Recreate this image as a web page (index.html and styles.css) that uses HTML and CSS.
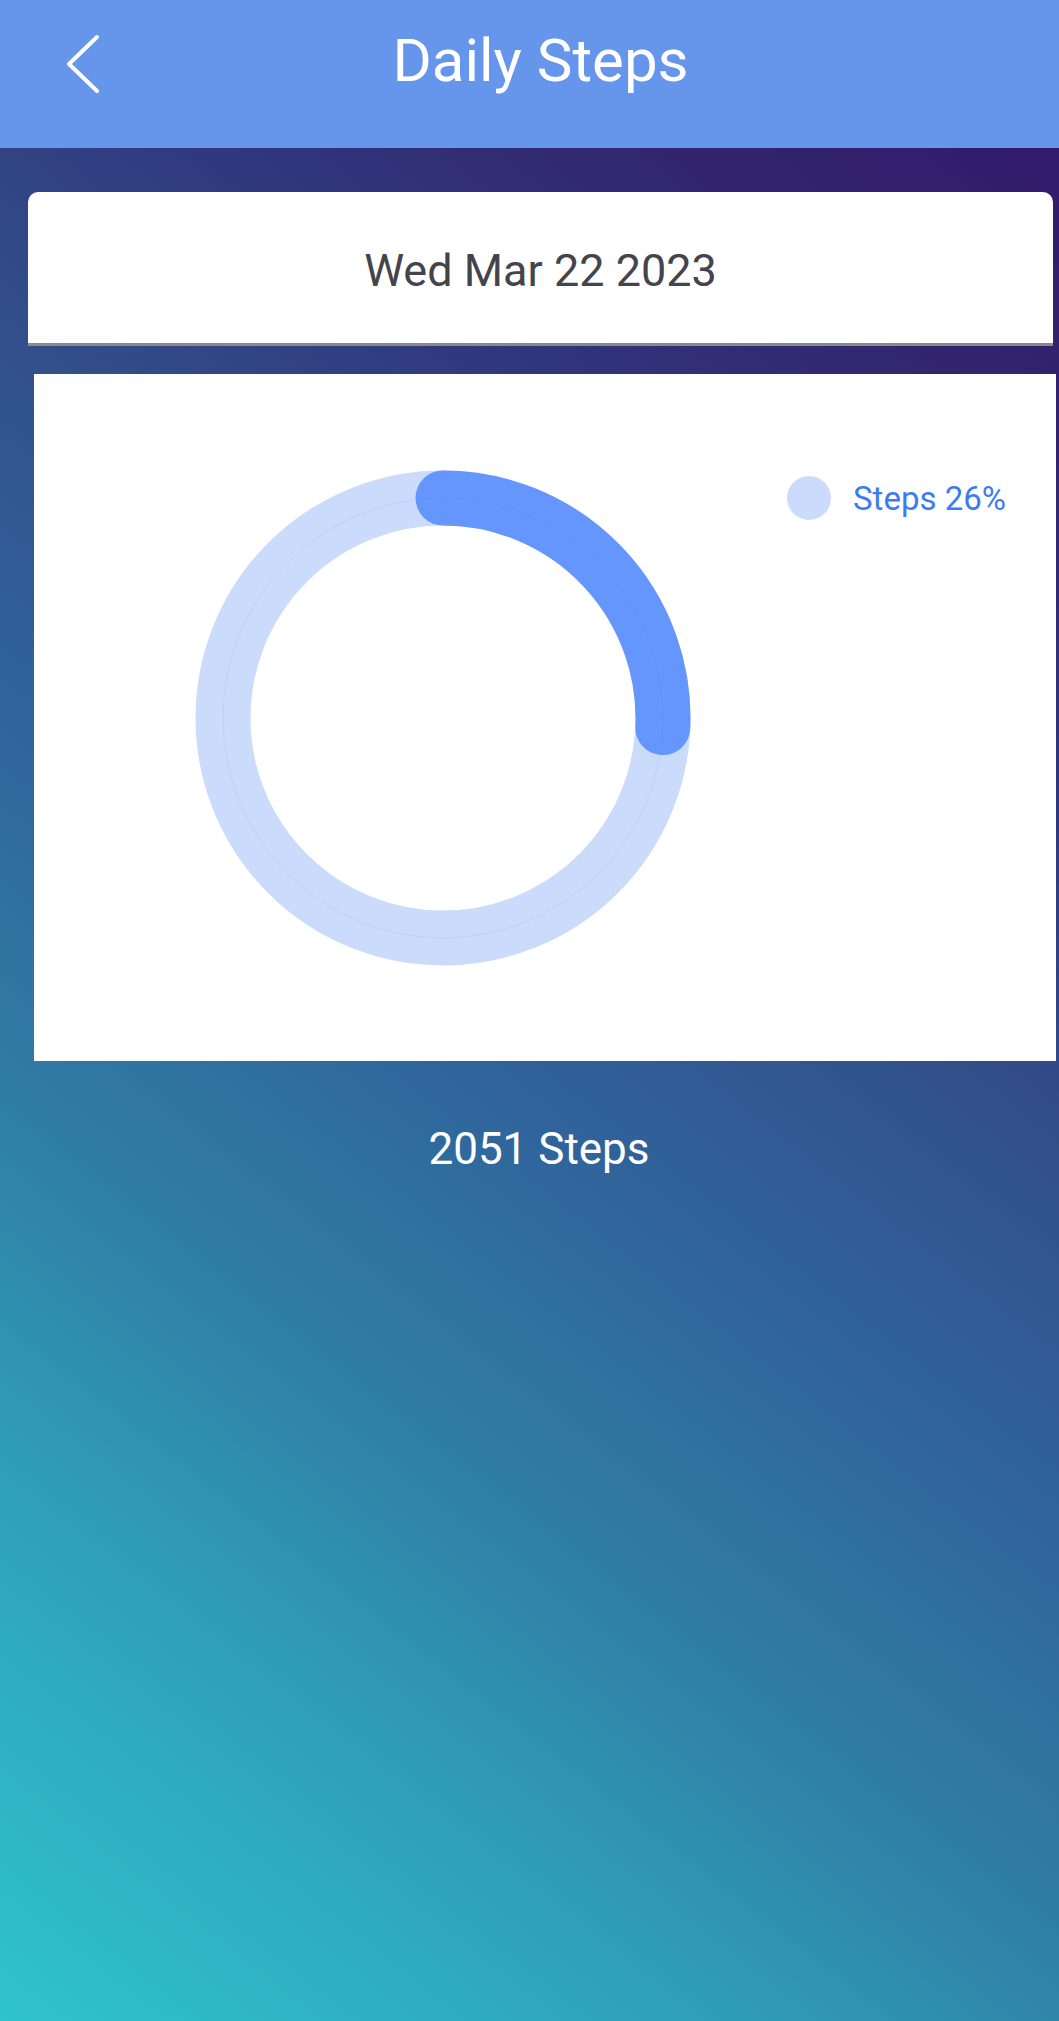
FILE: index.html
```html
<!DOCTYPE html>
<html lang="en">
<head>
<meta charset="utf-8">
<title>Daily Steps</title>
<link rel="stylesheet" href="styles.css">
</head>
<body>
<div class="screen">
  <header class="topbar">
    <button class="back" aria-label="Back">
      <svg class="back-icon" width="40" height="64" viewBox="0 0 40 64">
        <polyline points="31,5 3,32 31,59" fill="none" stroke="#ffffff" stroke-width="4" stroke-linecap="round" stroke-linejoin="round"/>
      </svg>
    </button>
    <h1 class="title">Daily Steps</h1>
    <div class="spacer"></div>
  </header>
  <main class="content">
    <section class="date-card">
      <div class="date-text">Wed Mar 22 2023</div>
    </section>
    <section class="chart-card">
      <svg class="donut" width="560" height="560" viewBox="0 0 560 560">
        <circle cx="280" cy="280" r="220" fill="none" stroke="#cbdbfc" stroke-width="55"/>
        <path d="M280 60 A220 220 0 0 1 499.79 289.6" fill="none" stroke="#6596fe" stroke-width="55" stroke-linecap="round"/>
        <circle cx="280" cy="280" r="220" fill="none" stroke="rgba(60,80,170,0.14)" stroke-width="0.6"/>
      </svg>
      <div class="legend">
        <span class="legend-dot"></span>
        <span class="legend-label">Steps 26%</span>
      </div>
    </section>
    <div class="total">2051 Steps</div>
  </main>
</div>
</body>
</html>
```
FILE: styles.css
```css
* {
  box-sizing: border-box;
}

html, body {
  margin: 0;
  padding: 0;
}

body {
  font-family: Roboto, "Noto Sans", "Liberation Sans", sans-serif;
}

.screen {
  display: flex;
  flex-direction: column;
  min-height: 2021px;
  width: 1059px;
}

.topbar {
  display: flex;
  align-items: flex-start;
  height: 148px;
  background: #6596eb;
}

.back {
  width: 130px;
  height: 100px;
  padding: 28px 0 0 66px;
  margin: 0;
  border: 0;
  background: none;
  text-align: left;
  cursor: pointer;
}

.back-icon {
  display: block;
}

.title {
  flex: 1;
  margin: 0;
  padding-top: 26px;
  font-size: 60px;
  line-height: 70px;
  font-weight: 400;
  color: #ffffff;
  text-align: center;
}

.spacer {
  width: 108px;
}

.content {
  flex: 1;
  display: flex;
  flex-direction: column;
  background: linear-gradient(38deg, #2ec4cc 0%, #2fa0ba 20%, #2f7ea5 34%, #30629a 50%, #324f8a 63%, #30377d 76%, #32266f 88%, #321a6c 100%);
}

.date-card {
  height: 154px;
  margin: 44px 6px 0 28px;
  padding-top: 53px;
  background: #ffffff;
  border-radius: 10px 10px 0 0;
  border-bottom: 3px solid #8a8a8c;
}

.date-text {
  font-size: 45px;
  line-height: 52px;
  color: #45444c;
  text-align: center;
}

.chart-card {
  display: flex;
  height: 687px;
  margin: 28px 3px 0 34px;
  background: #ffffff;
}

.donut {
  display: block;
  align-self: center;
  margin-left: 129px;
}

.legend {
  display: flex;
  align-items: center;
  gap: 22px;
  align-self: flex-start;
  margin-top: 102px;
  margin-left: 64px;
}

.legend-dot {
  width: 44px;
  height: 44px;
  border-radius: 50%;
  background: #cbdbfc;
}

.legend-label {
  font-size: 33px;
  color: #3b7cf4;
}

.total {
  margin-top: 62px;
  padding-left: 19px;
  font-size: 44px;
  color: #ffffff;
  text-align: center;
}
```
